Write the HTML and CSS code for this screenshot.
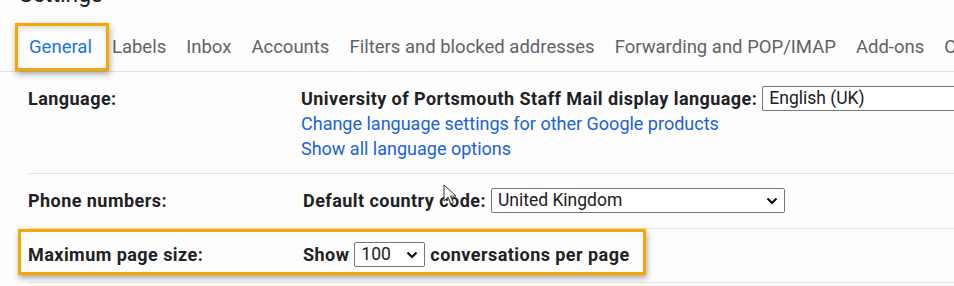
FILE: index.html
```html
<!DOCTYPE html>
<html lang="en">
<head>
<meta charset="utf-8">
<title>Settings</title>
<link rel="stylesheet" href="styles.css">
</head>
<body>
<div class="page">
  <h1 class="title">Settings</h1>
  <nav class="tabs">
    <span class="tab active">General</span>
    <span class="tab">Labels</span>
    <span class="tab">Inbox</span>
    <span class="tab">Accounts</span>
    <span class="tab">Filters and blocked addresses</span>
    <span class="tab">Forwarding and POP/IMAP</span>
    <span class="tab">Add-ons</span>
    <span class="tab">Chat and Meet</span>
  </nav>
  <div class="rows">
    <div class="row row-lang">
      <div class="label">Language:</div>
      <div class="value">
        <div class="line"><b>University of Portsmouth Staff Mail display language:</b><div class="select select-lang"><span>English (UK)</span></div></div>
        <div class="line"><a class="link" href="#">Change language settings for other Google products</a></div>
        <div class="line"><a class="link" href="#">Show all language options</a></div>
      </div>
    </div>
    <div class="row">
      <div class="label">Phone numbers:</div>
      <div class="value">
        <div class="line"><b class="ind">Default country code:</b><div class="select select-country"><span>United Kingdom</span><svg class="chev" viewBox="0 0 12 8" width="12" height="8"><path d="M1.5 1.5 L6 6 L10.5 1.5" fill="none" stroke="#111" stroke-width="2.2"/></svg></div></div>
      </div>
    </div>
    <div class="row row-size highlight">
      <div class="label">Maximum page size:</div>
      <div class="value">
        <div class="line"><b class="ind">Show</b><div class="select select-size"><span>100</span><svg class="chev" viewBox="0 0 12 8" width="12" height="8"><path d="M1.5 1.5 L6 6 L10.5 1.5" fill="none" stroke="#111" stroke-width="2.2"/></svg></div><b>conversations per page</b></div>
      </div>
    </div>
  </div>
  <svg class="cursor" viewBox="0 0 14 22" width="14" height="22"><path d="M1 1 L1 17 L5 13 L8 20 L10.5 19 L7.5 12 L13 12 Z" fill="#fff" stroke="#333" stroke-width="1" stroke-linejoin="round"/></svg>
</div>
</body>
</html>
```

FILE: styles.css
```css
html, body {
  margin: 0;
  padding: 0;
  background: #fdfdfd;
  overflow: hidden;
}
.page {
  position: relative;
  width: 954px;
  height: 286px;
  overflow: hidden;
  font-family: Roboto, "Noto Sans", Arial, sans-serif;
  color: #202124;
}
.title {
  margin: -19px 0 0 19px;
  font-size: 23px;
  line-height: 28px;
  font-weight: 400;
  color: #1f1f1f;
}
.tabs {
  display: flex;
  gap: 20px;
  white-space: nowrap;
  padding: 26px 0 12px 29px;
  border-bottom: 1px solid #e3e3e3;
}
.tab {
  font-size: 18.5px;
  line-height: 24px;
  color: #5f6368;
}
.tab.active {
  position: relative;
  color: #1a73e8;
}
.tab.active::after {
  content: "";
  position: absolute;
  left: -14px;
  right: -17px;
  top: -12px;
  bottom: -12px;
  border: 3px solid #f6a800;
  box-shadow: 1px 3px 6px rgba(0,0,0,0.35), inset 0 3px 4px rgba(0,0,0,0.12);
}
.rows {
  margin-left: 28px;
}
.row {
  display: grid;
  grid-template-columns: 273px 1fr;
  padding: 14px 0 15px;
  border-bottom: 1px solid #e3e3e3;
}
.row-lang {
  padding-bottom: 12px;
}
.row-size {
  padding-top: 13px;
}
.highlight {
  position: relative;
}
.highlight::after {
  content: "";
  position: absolute;
  left: -10px;
  top: 0;
  width: 628px;
  height: 46px;
  box-sizing: border-box;
  border: 3px solid #f6a800;
  box-shadow: 1px 3px 6px rgba(0,0,0,0.35);
}
.label {
  font-size: 18px;
  font-weight: 700;
  line-height: 25px;
  letter-spacing: 0.45px;
  color: #202124;
}
.value {
  font-size: 18px;
  line-height: 25px;
}
.line {
  display: flex;
  align-items: center;
  height: 25px;
  white-space: nowrap;
}
.line b {
  font-size: 18px;
  font-weight: 700;
  letter-spacing: 0.45px;
}
.line b.ind {
  margin-left: 2px;
}
.link {
  color: #1a62d9;
  text-decoration: none;
}
.select {
  box-sizing: border-box;
  height: 25px;
  margin: 0 5px;
  border: 1px solid #767676;
  border-radius: 2px;
  background: #fff;
  display: flex;
  align-items: center;
  justify-content: space-between;
  padding: 0 6px 0 6px;
  font-size: 17.5px;
  color: #202124;
  flex: none;
}
.select-lang {
  width: 220px;
}
.select-country {
  width: 294px;
}
.select-size {
  width: 71px;
}
.chev {
  display: block;
}
.cursor {
  position: absolute;
  left: 443px;
  top: 184px;
}
```
